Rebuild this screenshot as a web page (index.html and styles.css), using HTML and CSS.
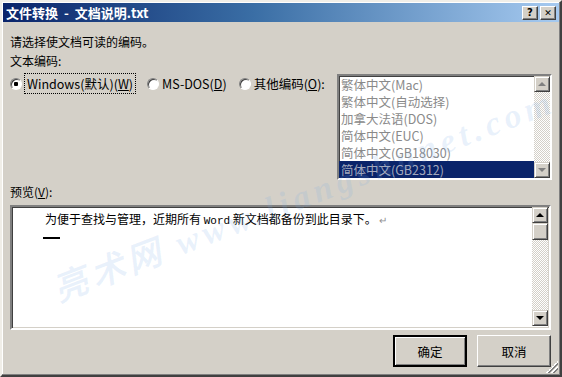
FILE: index.html
```html
<!DOCTYPE html>
<html lang="zh-CN">
<head>
    <meta charset="UTF-8">
    <title>文件转换 - 文档说明.txt</title>
    <link rel="stylesheet" href="styles.css">
</head>
<body>

    <div class="dialog">
        <div class="title-bar">
            <span class="title-text">文件转换 - 文档说明.txt</span>
            <div class="title-buttons">
                <span class="cap-btn">?</span>
                <span class="cap-btn cap-close">✕</span>
            </div>
        </div>

        <div class="content">
            <p class="intro">请选择使文档可读的编码。</p>

            <div class="encoding-row">
                <div class="encoding-left">
                    <p class="label">文本编码:</p>
                    <div class="radios">
                        <label class="radio checked focus"><span class="dot"></span><span class="focus-text">Windows(默认)(<u>W</u>)</span></label>
                        <label class="radio"><span class="dot"></span><span>MS-DOS(<u>D</u>)</span></label>
                        <label class="radio"><span class="dot"></span><span>其他编码(<u>O</u>):</span></label>
                    </div>
                </div>

                <div class="listbox">
                    <ul class="items">
                        <li>繁体中文(Mac)</li>
                        <li>繁体中文(自动选择)</li>
                        <li>加拿大法语(DOS)</li>
                        <li>简体中文(EUC)</li>
                        <li>简体中文(GB18030)</li>
                        <li class="selected">简体中文(GB2312)</li>
                    </ul>
                    <div class="scrollbar">
                        <span class="arrow up"></span>
                        <span class="track"></span>
                        <span class="arrow down"></span>
                    </div>
                </div>
            </div>

            <p class="label preview-label">预览(<u>V</u>):</p>

            <div class="preview">
                <div class="preview-text">
                    <p>为便于查找与管理，近期所有 <span class="mono">Word</span> 新文档都备份到此目录下。<span class="para">↵</span></p>
                    <span class="cursor"></span>
                </div>
                <div class="scrollbar dark">
                    <span class="arrow up"></span>
                    <span class="thumb"></span>
                    <span class="track"></span>
                    <span class="arrow down"></span>
                </div>
            </div>

            <div class="actions">
                <button class="btn default">确定</button>
                <button class="btn">取消</button>
            </div>
        </div>

        <span class="grip"></span>
        <div class="watermark">亮术网 www.liangshunet.com</div>
    </div>

</body>
</html>
```

FILE: styles.css
```css
body {
    margin: 0;
    font-family: "Noto Sans CJK SC", "Noto Sans", sans-serif;
    font-size: 12px;
    color: #000;
    background-color: #d4d0c8;
}
p {
    margin: 0;
}
.dialog {
    position: relative;
    box-sizing: border-box;
    width: 562px;
    height: 377px;
    padding: 1px;
    background-color: #d4d0c8;
    border: 2px solid;
    border-color: #f0eee8 #404040 #404040 #f0eee8;
    box-shadow: inset -1px -1px 0 #808080, inset 1px 1px 0 #ffffff;
    overflow: hidden;
}
.title-bar {
    display: flex;
    justify-content: space-between;
    align-items: center;
    height: 19px;
    padding: 0 3px 0 3px;
    background: linear-gradient(to right, #0a246a 0%, #3a6ea5 45%, #a6caf0 100%);
}
.title-text {
    color: #fff;
    font-weight: bold;
    font-size: 13px;
    line-height: 19px;
    word-spacing: 3px;
}
.title-buttons {
    display: flex;
    gap: 2px;
}
.cap-btn {
    box-sizing: border-box;
    width: 16px;
    height: 14px;
    background-color: #d4d0c8;
    border: 1px solid;
    border-color: #fff #404040 #404040 #fff;
    box-shadow: inset -1px -1px 0 #808080;
    font-family: "DejaVu Sans", sans-serif;
    font-weight: bold;
    font-size: 10px;
    line-height: 12px;
    text-align: center;
}
.cap-close {
    font-size: 9px;
}
.content {
    padding: 0 7px 0 7px;
}
.intro {
    margin-top: 11px;
    line-height: 18px;
}
.encoding-row {
    display: flex;
    justify-content: space-between;
}
.label {
    line-height: 17px;
}
.encoding-left .label {
    margin-top: 1px;
}
.radios {
    display: flex;
    gap: 12px;
    margin-top: 6px;
}
.radio {
    display: flex;
    align-items: center;
    gap: 3px;
    height: 17px;
    font-size: 12.5px;
}
.dot {
    box-sizing: border-box;
    width: 12px;
    height: 12px;
    border-radius: 50%;
    background-color: #fff;
    border: 1px solid;
    border-color: #808080 #fff #fff #808080;
    box-shadow: inset 1px 1px 0 #404040;
}
.checked .dot {
    background: radial-gradient(circle, #000 0 2px, #fff 2.5px);
}
.focus-text {
    outline: 1px dotted #000;
    padding: 0 2px;
}
.radio u, .label u {
    text-decoration: underline;
}
.listbox {
    display: flex;
    box-sizing: border-box;
    width: 215px;
    height: 106px;
    margin-top: 23px;
    background-color: #fff;
    border: 2px solid;
    border-color: #808080 #fff #fff #808080;
    box-shadow: inset 1px 1px 0 #404040, inset -1px -1px 0 #d4d0c8;
}
.items {
    flex: 1;
    margin: 0;
    padding: 0;
    list-style: none;
}
.items li {
    height: 17px;
    line-height: 17px;
    padding-left: 2px;
    color: #8a8a8a;
    font-size: 12.5px;
}
.items li.selected {
    background-color: #0a246a;
    color: #a3a9bd;
}
.scrollbar {
    display: flex;
    flex-direction: column;
    width: 16px;
    background-image: repeating-conic-gradient(#ffffff 0 25%, #d4d0c8 0 50%);
    background-size: 2px 2px;
}
.track {
    flex: 1;
}
.arrow {
    position: relative;
    box-sizing: border-box;
    height: 16px;
    background-color: #d4d0c8;
    border: 1px solid;
    border-color: #d4d0c8 #404040 #404040 #d4d0c8;
    box-shadow: inset 1px 1px 0 #fff, inset -1px -1px 0 #808080;
}
.arrow::after {
    content: "";
    position: absolute;
    left: 3px;
    border-left: 4px solid transparent;
    border-right: 4px solid transparent;
}
.arrow.up::after {
    top: 5px;
    border-bottom: 4px solid #808080;
}
.arrow.down::after {
    top: 5px;
    border-top: 4px solid #808080;
}
.dark .arrow.up::after {
    border-bottom-color: #000;
}
.dark .arrow.down::after {
    border-top-color: #000;
}
.thumb {
    box-sizing: border-box;
    height: 17px;
    background-color: #d4d0c8;
    border: 1px solid;
    border-color: #d4d0c8 #404040 #404040 #d4d0c8;
    box-shadow: inset 1px 1px 0 #fff, inset -1px -1px 0 #808080;
}
.preview-label {
    margin-top: 3px;
}
.preview {
    display: flex;
    box-sizing: border-box;
    height: 125px;
    margin-top: 5px;
    margin-right: 1px;
    background-color: #fff;
    border: 2px solid;
    border-color: #808080 #fff #fff #808080;
    box-shadow: inset 1px 1px 0 #404040, inset -1px -1px 0 #d4d0c8;
    padding: 0 1px 2px 0;
}
.preview-text {
    flex: 1;
    padding: 4px 0 0 33px;
}
.preview-text p {
    line-height: 16px;
    font-size: 12px;
}
.mono {
    font-family: "Liberation Mono", monospace;
    font-size: 11px;
}
.para {
    color: #909090;
    font-size: 10px;
    margin-left: 2px;
}
.cursor {
    display: block;
    width: 17px;
    height: 2px;
    margin: 8px 0 0 -2px;
    background-color: #000;
}
.actions {
    display: flex;
    justify-content: flex-end;
    gap: 10px;
    margin-top: 5px;
    margin-right: 1px;
}
.btn {
    box-sizing: border-box;
    width: 74px;
    height: 32px;
    font-family: "Noto Sans CJK SC", sans-serif;
    font-size: 12.5px;
    background-color: #d4d0c8;
    border: 1px solid;
    border-color: #fff #404040 #404040 #fff;
    box-shadow: inset -1px -1px 0 #808080;
    padding: 0;
}
.btn.default {
    border: 2px solid #000;
    box-shadow: inset 1px 1px 0 #fff, inset -1px -1px 0 #808080;
}
.grip {
    position: absolute;
    right: 2px;
    bottom: 2px;
    width: 12px;
    height: 12px;
    background: linear-gradient(135deg, transparent 0 50%, #fff 50% 56%, #808080 56% 64%, transparent 64% 70%, #fff 70% 76%, #808080 76% 84%, transparent 84%);
}
.watermark {
    position: absolute;
    left: 52px;
    top: 262px;
    transform: rotate(-21deg);
    transform-origin: left center;
    font-family: "Liberation Serif", serif;
    font-style: italic;
    font-weight: bold;
    font-size: 34px;
    letter-spacing: 5px;
    color: rgba(120, 170, 230, 0.16);
    white-space: nowrap;
    pointer-events: none;
}
```
